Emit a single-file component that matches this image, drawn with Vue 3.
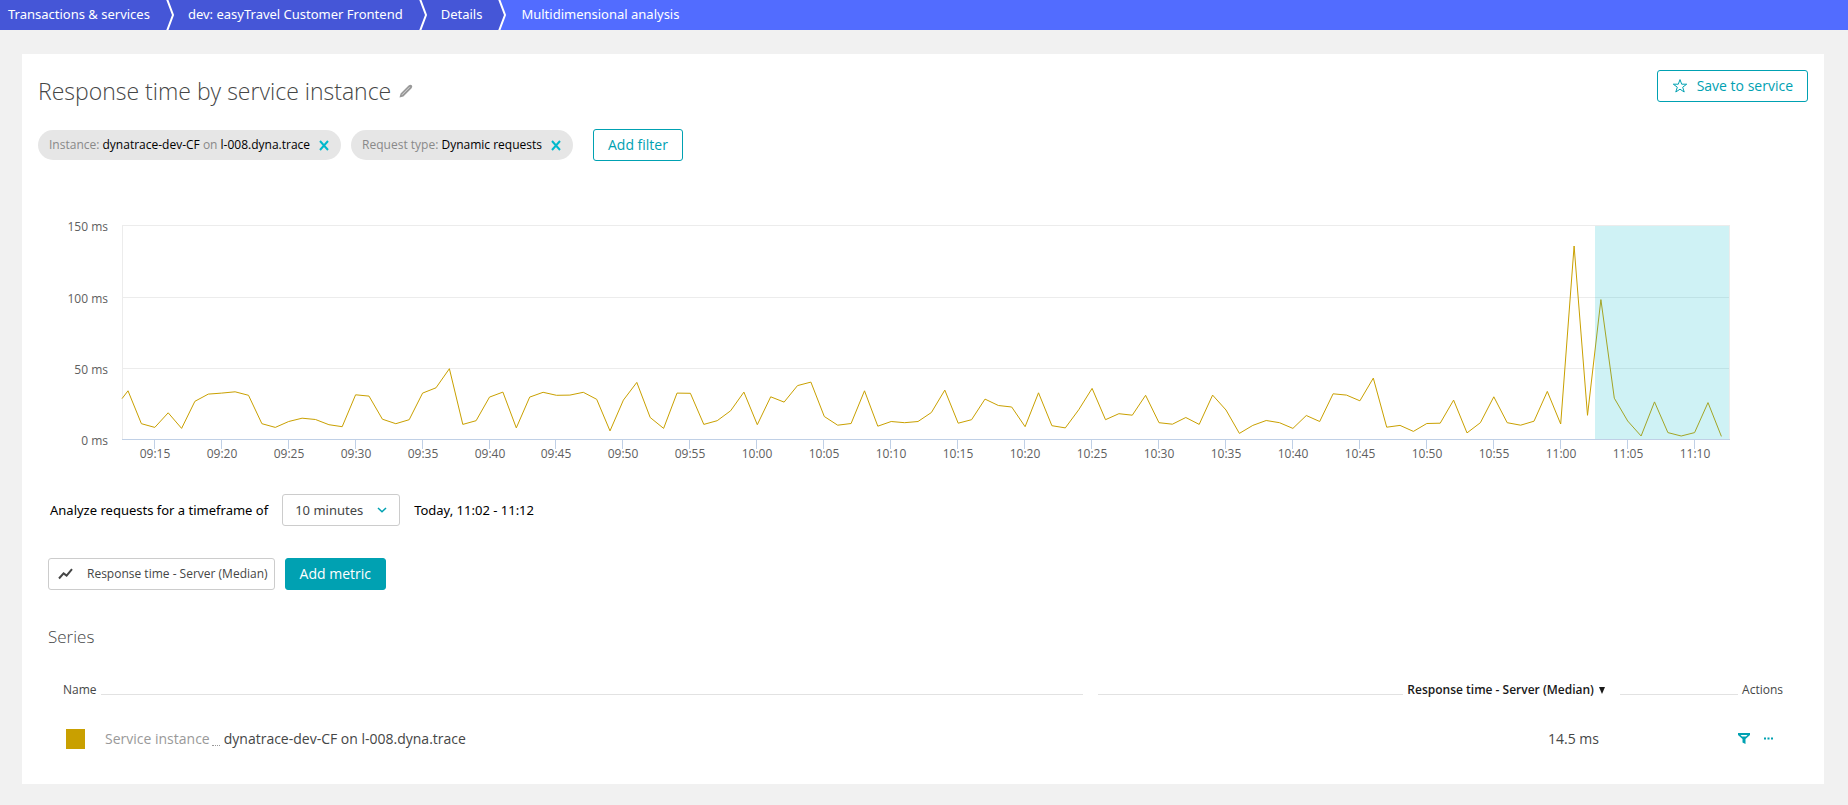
<script setup>
import { ref } from 'vue'

const crumbs = ['Transactions & services', 'dev: easyTravel Customer Frontend', 'Details']
const timeframe = ref('10 minutes')

// One value per minute, 09:13 to 11:12, in milliseconds
const series = [
  34.5, 11.4, 8.8, 19.1, 8.1, 27.1, 32.2, 32.9, 33.8, 31.3, 11.4, 8.8, 13, 15.3, 14.4, 10.7, 9.3,
  31.7, 30.8, 14.6, 11.4, 14.2, 32.9, 36.6, 50, 10.9, 13.5, 30.1, 33.6, 8.5, 30.1, 33.4, 31.3,
  31.5, 33.4, 28.5, 6.4, 28, 40.4, 15.8, 8.1, 32.9, 32.7, 10.9, 13.5, 20.5, 33.6, 10.7, 30.3,
  26.6, 38.1, 40.6, 16.5, 10.4, 11.6, 34.5, 9.7, 13, 12.1, 13, 19.3, 35, 11.8, 14.2, 28.7, 24.2,
  23.1, 9.3, 33.1, 10, 8.5, 21.2, 36.2, 14.2, 18.4, 17.4, 31.3, 12.1, 11.1, 15.8, 10.9, 31.5, 21,
  4.6, 10.2, 13.7, 12.1, 8.1, 17.2, 13, 32.4, 31.5, 27.5, 43.4, 9, 10.2, 6, 11.6, 11.8, 28, 5,
  12.1, 30.3, 12.1, 10.4, 13.2, 34.1, 11.2, 136, 17.3, 98.4, 29.3, 13.3, 2.8, 26.7, 5.2, 2.8,
  5.2, 26.2, 2.5
]

const plot = { left: 100, right: 1708, top: 16, base: 230 }
const toX = (minute) => 106 + minute * 13.39
const toY = (ms) => plot.base - (ms * (plot.base - plot.top)) / 150

const line = [`${plot.left},${toY(29)}`, ...series.map((v, i) => `${toX(i).toFixed(1)},${toY(v).toFixed(1)}`)].join(' ')

const levels = [150, 100, 50, 0].map((ms) => ({ label: `${ms} ms`, y: Math.ceil(toY(ms)) }))

const ticks = Array.from({ length: 24 }, (_, i) => {
  const total = 9 * 60 + 15 + i * 5
  const pad = (n) => String(n).padStart(2, '0')
  return { label: `${pad(Math.floor(total / 60))}:${pad(total % 60)}`, x: Math.round(toX(2 + i * 5)) }
})
</script>

<template>
  <div class="page">
    <nav class="crumbs" aria-label="Breadcrumb">
      <template v-for="crumb in crumbs" :key="crumb">
        <a class="crumb" href="#">{{ crumb }}</a>
        <svg class="divider" width="9" height="30" viewBox="0 0 9 30" aria-hidden="true">
          <path class="divider-fill" d="M0 0H1L7 15L1 30H0Z" />
          <path class="divider-line" d="M1 -1L7 15L1 31" />
        </svg>
      </template>
      <span class="current" aria-current="page">Multidimensional analysis</span>
    </nav>

    <main class="panel">
      <header class="head">
        <div class="title-row">
          <h1>Response time by service instance</h1>
          <button class="icon-button" type="button" aria-label="Edit title">
            <svg width="14" height="14" viewBox="0 0 14 14">
              <path d="M0.5 13.5L1.6 9.6L9.6 1.6Q11.2 0 12.8 1.2Q14 2.8 12.4 4.4L4.4 12.4Z" fill="#999" />
              <path d="M3 10.8L10.6 3.2" stroke="#d4d4d4" stroke-width="1" />
            </svg>
          </button>
        </div>
        <button class="button save" type="button">
          <svg width="16" height="16" viewBox="0 0 16 16" fill="none" stroke="#00a1b2">
            <path d="M8 1.6L9.7 6.2H14.7L10.7 9.2L12.2 14L8 11.2L3.8 14L5.3 9.2L1.3 6.2H6.3Z" />
          </svg>
          Save to service
        </button>
      </header>

      <section class="filters" aria-label="Filters">
        <div class="chip">
          <span>Instance: <b>dynatrace-dev-CF</b> on <b>l-008.dyna.trace</b></span>
          <button class="icon-button" type="button" aria-label="Remove instance filter">
            <svg width="12" height="12" viewBox="0 0 12 12"><path d="M2 2L10 11M10 2L2 11" stroke="#00b9cc" stroke-width="2" /></svg>
          </button>
        </div>
        <div class="chip">
          <span>Request type: <b>Dynamic requests</b></span>
          <button class="icon-button" type="button" aria-label="Remove request type filter">
            <svg width="12" height="12" viewBox="0 0 12 12"><path d="M2 2L10 11M10 2L2 11" stroke="#00b9cc" stroke-width="2" /></svg>
          </button>
        </div>
        <button class="button add-filter" type="button">Add filter</button>
      </section>

      <svg class="chart" viewBox="0 0 1802 254" role="img" aria-label="Response time over time">
        <g class="grid">
          <path v-for="l in levels.slice(0, 3)" :key="l.y" :d="`M${plot.left} ${l.y - 0.5}H${plot.right}`" />
          <path :d="`M${plot.left + 0.5} ${plot.top}V${plot.base}M${plot.right - 0.5} ${plot.top}V${plot.base}`" />
        </g>
        <text v-for="l in levels" :key="l.label" class="axis" text-anchor="end" x="86" :y="l.y + 5">{{ l.label }}</text>
        <polyline class="series" :points="line" />
        <rect class="selection" x="1573" :y="plot.top" width="134" :height="plot.base - plot.top" />
        <path class="base" :d="`M${plot.left} ${plot.base - 0.5}H${plot.right}`" />
        <g v-for="t in ticks" :key="t.label">
          <path class="base" :d="`M${t.x - 0.5} ${plot.base}v9`" />
          <text class="axis" text-anchor="middle" :x="t.x" :y="plot.base + 18">{{ t.label }}</text>
        </g>
      </svg>

      <section class="timeframe">
        <label for="timeframe">Analyze requests for a timeframe of</label>
        <span class="select">
          <select id="timeframe" v-model="timeframe">
            <option>10 minutes</option>
            <option>30 minutes</option>
          </select>
          <svg width="10" height="6" viewBox="0 0 10 6" fill="none" stroke="#00a1b2" stroke-width="1.500">
            <path d="M1 1L5 4.800L9 1" />
          </svg>
        </span>
        <span>Today, 11:02 - 11:12</span>
      </section>

      <section class="metrics">
        <button class="metric" type="button">
          <svg width="15" height="12" viewBox="0 0 15 12" fill="none" stroke="#454646" stroke-width="2">
            <path d="M1 10.500L5.600 5.400L8.600 7.600L14 1.200" />
          </svg>
          Response time - Server (Median)
        </button>
        <button class="button primary" type="button">Add metric</button>
      </section>

      <h2>Series</h2>
      <table>
        <thead>
          <tr>
            <th class="col-name" scope="col"><div class="th">Name<i></i></div></th>
            <th class="col-value" scope="col">
              <div class="th"><i></i><button class="sort" type="button">Response time - Server (Median)
                <svg width="6" height="7" viewBox="0 0 6 7" aria-hidden="true"><path d="M0 0H6L3 7Z" fill="#191919" /></svg>
              </button></div>
            </th>
            <th class="col-actions" scope="col"><div class="th"><i></i>Actions</div></th>
          </tr>
        </thead>
        <tbody>
          <tr>
            <td class="col-name">
              <div class="name">
                <span class="swatch"></span>
                <span class="kind">Service instance</span>
                <span class="dots"></span>
                <span>dynatrace-dev-CF on l-008.dyna.trace</span>
              </div>
            </td>
            <td class="col-value value">14.5 ms</td>
            <td class="col-actions">
              <div class="actions">
                <button class="icon-button" type="button" aria-label="Filter">
                  <svg width="12" height="11" viewBox="0 0 12 11">
                    <path d="M0 0H12V2L7.500 6V11L4.500 9.500V6L0 2Z" fill="#00a1b2" />
                    <path d="M2.500 2H9.500L8 3.500H4Z" fill="#fff" />
                  </svg>
                </button>
                <button class="icon-button" type="button" aria-label="More">
                  <svg width="9" height="3" viewBox="0 0 9 3" fill="#00a1b2">
                    <path d="M0 .5h2v2h-2zM3.500 .5h2v2h-2zM7 .5h2v2h-2z" />
                  </svg>
                </button>
              </div>
            </td>
          </tr>
        </tbody>
      </table>
    </main>
  </div>
</template>

<style>
body {
  background: #f1f1f1;
}
</style>

<style scoped>
.page {
  font-family: "Open Sans", "Noto Sans", sans-serif;
  font-size: 14px;
  line-height: 20px;
  color: #454646;
}
button,
select {
  font: inherit;
  color: inherit;
  margin: 0;
  cursor: pointer;
}
.crumbs {
  display: flex;
  height: 30px;
  font-family: "Noto Sans", sans-serif;
  font-size: 13px;
  line-height: 28px;
  background: #526cff;
  color: #fff;
}
.crumb {
  padding: 0 16px 0 13px;
  background: #4556d7;
  color: #fff;
  text-decoration: none;
}
.crumb:first-child {
  padding-left: 8px;
}
.divider {
  flex: none;
  background: #4556d7;
}
.divider:last-of-type {
  background: #526cff;
}
.divider-fill {
  fill: #4556d7;
}
.divider-line {
  fill: none;
  stroke: #fff;
  stroke-width: 2;
}
.current {
  padding-left: 14px;
}
.panel {
  margin: 24px 24px 20px 22px;
  padding: 16px 0 35px;
  background: #fff;
}
.head {
  display: flex;
  justify-content: space-between;
  padding: 0 16px;
}
.title-row {
  display: flex;
  align-items: center;
  gap: 8px;
  padding-top: 3px;
}
h1 {
  margin: 0;
  font-size: 23px;
  line-height: 36px;
  font-weight: 300;
}
.icon-button {
  display: flex;
  padding: 0;
  border: 0;
  background: none;
}
.button {
  display: flex;
  align-items: center;
  height: 32px;
  padding: 0 14px;
  border: 1px solid #00a1b2;
  border-radius: 3px;
  background: #fff;
  color: #00a1b2;
}
.save {
  gap: 9px;
}
.filters {
  display: flex;
  align-items: center;
  gap: 10px;
  padding: 20px 16px 0;
}
.chip {
  display: flex;
  align-items: center;
  gap: 8px;
  height: 30px;
  padding: 0 11px;
  border-radius: 15px;
  background: #e6e6e6;
  color: #898989;
  font-size: 12px;
}
.chip b {
  font-weight: 400;
  color: #000;
}
.add-filter {
  margin-left: 10px;
}
.chart {
  display: block;
  width: 100%;
  height: auto;
  margin-top: 49px;
}
.grid {
  fill: none;
  stroke: #ececec;
}
.axis {
  font-size: 12px;
  fill: #606060;
}
.series {
  fill: none;
  stroke: #c9a000;
  stroke-width: 1;
}
.selection {
  fill: #00b9cc;
  fill-opacity: 0.19;
}
.base {
  stroke: #c0d0e6;
}
.timeframe {
  display: flex;
  align-items: center;
  padding: 30px 28px 0;
  font-family: "Noto Sans", sans-serif;
  font-size: 13px;
  color: #000;
}
.select {
  display: grid;
  align-items: center;
  margin: 0 14px;
}
.select select,
.select svg {
  grid-area: 1 / 1;
}
.select select {
  appearance: none;
  width: 118px;
  height: 32px;
  padding: 0 12px;
  border: 1px solid #ccc;
  border-radius: 3px;
  background: #fff;
  color: #454646;
}
.select svg {
  justify-self: end;
  margin-right: 13px;
  pointer-events: none;
}
.metrics {
  display: flex;
  gap: 10px;
  padding: 32px 26px 0;
}
.metric {
  display: flex;
  align-items: center;
  gap: 14px;
  height: 32px;
  padding: 0 6px 0 9px;
  border: 1px solid #ccc;
  border-radius: 3px;
  background: #fff;
  font-size: 12px;
}
.primary {
  background: #00a1b2;
  color: #fff;
}
h2 {
  margin: 34px 26px 0;
  font-size: 17px;
  line-height: 26px;
  font-weight: 300;
}
table {
  width: calc(100% - 82px);
  margin: 28px 41px 0;
  border-collapse: collapse;
  table-layout: fixed;
}
th,
td {
  padding: 0;
  font-weight: 400;
  text-align: left;
}
.th {
  display: flex;
  gap: 4px;
  font-size: 12px;
  line-height: 24px;
}
.th i {
  flex: 1;
  height: 16px;
  border-bottom: 1px solid #e2e2e2;
}
.col-name {
  padding-right: 15px;
}
.col-value {
  width: 507px;
  padding-right: 15px;
}
.col-actions {
  width: 163px;
}
.sort {
  padding: 0;
  border: 0;
  background: none;
  color: #191919;
  font-weight: 600;
}
.sort svg {
  margin-left: 2px;
}
.name {
  display: flex;
  align-items: center;
  padding: 27px 0 0 3px;
}
.swatch {
  width: 19px;
  height: 20px;
  margin-right: 20px;
  background: #c9a000;
}
.kind {
  color: #999;
}
.dots {
  width: 8px;
  height: 13px;
  margin: 0 4px 0 2px;
  border-bottom: 1px dotted #999;
}
.value {
  padding-top: 26px;
  padding-right: 21px;
  text-align: right;
}
.actions {
  display: flex;
  align-items: center;
  justify-content: flex-end;
  gap: 14px;
  padding: 26px 10px 0 0;
}
</style>
